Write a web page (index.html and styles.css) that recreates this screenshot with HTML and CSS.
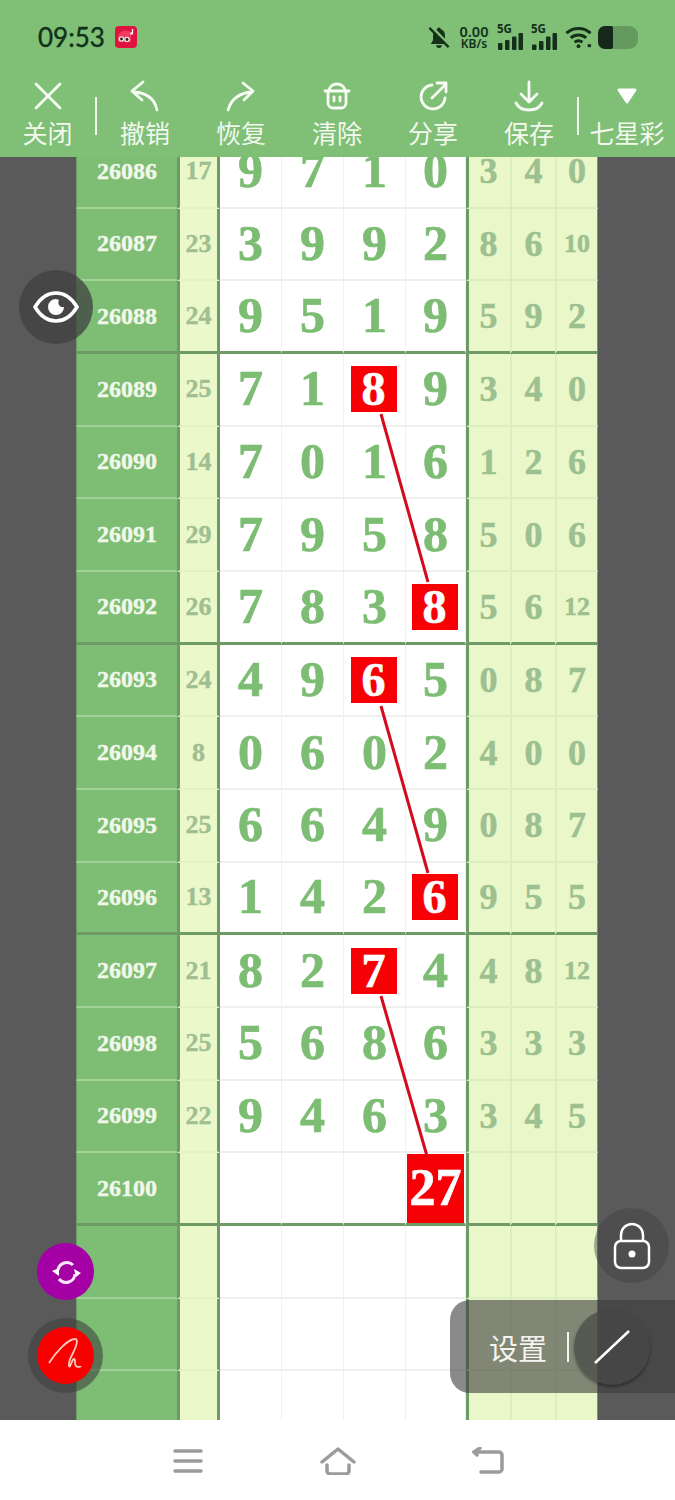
FILE: index.html
```html
<!DOCTYPE html>
<html lang="zh-CN">
<head>
    <meta charset="UTF-8">
    <meta name="viewport" content="width=device-width, initial-scale=1.0">
    <title>七星彩</title>
    <link rel="stylesheet" href="styles.css">
</head>
<body>
    <header class="top">
        <div class="status">
            <span class="time">09:53</span>
            <svg class="pig" viewBox="0 0 22 22"><rect width="22" height="22" rx="4" fill="#e0123f"/><path d="M3 10c2-6 10-7 13-3v9H3z" fill="#f23a5c"/><circle cx="6.500" cy="13" r="2.800" fill="#f6dfe3"/><circle cx="12" cy="13.500" r="2.800" fill="#f6dfe3"/><circle cx="6.500" cy="13" r="1.400" fill="#222"/><circle cx="12" cy="13.500" r="1.400" fill="#222"/><path d="M17.500 3v4.500" stroke="#fff" stroke-width="1.300"/><circle cx="16.500" cy="7.500" r="1.300" fill="#fff"/></svg>
            <div class="status-right">
                <svg class="bell" viewBox="0 0 24 24"><path d="M12 1a2 2 0 0 1 2 2c3 1 4.500 3.500 4.500 7v5l2.500 4H3l2.500-4v-5c0-3.500 1.500-6 4.500-7a2 2 0 0 1 2-2zM9 20.500h6a3 3 0 0 1-6 0z" fill="#14301a"/><path d="M3 0l21 22" stroke="#7fbf76" stroke-width="4"/><path d="M1.500 1.500l21 21" stroke="#14301a" stroke-width="2.500"/></svg>
                <div class="speed"><b>0.00</b><small>KB/s</small></div>
                <div class="signal"><small>5G</small><svg viewBox="0 0 26 17"><rect x="1" y="10" width="4.500" height="7" rx="1"/><rect x="8" y="7" width="4.500" height="10" rx="1"/><rect x="15" y="3.500" width="4.500" height="13.500" rx="1"/><rect x="21.500" y="0" width="4.500" height="17" rx="1"/></svg></div>
                <div class="signal"><small>5G</small><svg viewBox="0 0 26 17"><rect x="1" y="11.500" width="4.500" height="5.500" rx="1"/><rect x="8" y="8" width="4.500" height="9" rx="1"/><rect x="15" y="3.500" width="4.500" height="13.500" rx="1"/><rect x="21.500" y="0" width="4.500" height="17" rx="1"/></svg></div>
                <svg class="wifi" viewBox="0 0 28 24" fill="none" stroke="#14301a" stroke-width="3.200"><path d="M1.500 8c7-6.500 18-6.500 25 0"/><path d="M6 13c4.500-4 11.500-4 16 0"/><path d="M10 17.500c2.500-2 5.500-2 8 0"/><circle cx="14" cy="21.500" r="2" fill="#14301a" stroke="none"/><rect x="23.500" y="19.500" width="3.500" height="3" fill="#14301a" stroke="none"/></svg>
                <div class="battery"><span class="battery-fill"></span></div>
            </div>
        </div>
        <nav class="tools">
            <a class="tool"><svg viewBox="0 0 32 32"><path d="M4 4l24 24M28 4L4 28"/></svg>关闭</a>
            <span class="tool-sep"></span>
            <a class="tool"><svg viewBox="0 0 32 32"><path d="M28 30C26 20 19 13 5 12"/><path d="M14 2L3 11l10 9"/></svg>撤销</a>
            <a class="tool"><svg viewBox="0 0 32 32"><path d="M3 30C6 20 13 13 27 12"/><path d="M18 3l10 8-9 9"/></svg>恢复</a>
            <a class="tool"><svg viewBox="0 0 32 32"><path d="M4 11h24"/><path d="M8 11a8 7 0 0 1 16 0"/><path d="M7 11v12a5 5 0 0 0 5 5h8a5 5 0 0 0 5-5V11"/><path d="M13 17v4M19 17v4"/></svg>清除</a>
            <a class="tool"><svg viewBox="0 0 32 32"><path d="M15 5a12 12 0 1 0 13 13"/><path d="M15 18L29 4M20 3h9v9"/></svg>分享</a>
            <a class="tool"><svg viewBox="0 0 32 32"><path d="M16 2v20M8 14l8 8 8-8"/><path d="M3 23c3 6 8 7 13 7s10-1 13-7"/></svg>保存</a>
            <span class="tool-sep"></span>
            <a class="tool"><svg viewBox="0 0 32 32"><path class="solid" d="M8 10h16l-8 12z"/></svg>七星彩</a>
        </nav>
    </header>

    <main class="main">
        <div class="board">
            <div class="row"><span class="year">26086</span><span class="sum">17</span><span class="n">9</span><span class="n">7</span><span class="n">1</span><span class="n">0</span><span class="r">3</span><span class="r">4</span><span class="r">0</span></div>
            <div class="row"><span class="year">26087</span><span class="sum">23</span><span class="n">3</span><span class="n">9</span><span class="n">9</span><span class="n">2</span><span class="r">8</span><span class="r">6</span><span class="r small">10</span></div>
            <div class="row end"><span class="year">26088</span><span class="sum">24</span><span class="n">9</span><span class="n">5</span><span class="n">1</span><span class="n">9</span><span class="r">5</span><span class="r">9</span><span class="r">2</span></div>
            <div class="row"><span class="year">26089</span><span class="sum">25</span><span class="n">7</span><span class="n">1</span><span class="n"><b class="hit">8</b></span><span class="n">9</span><span class="r">3</span><span class="r">4</span><span class="r">0</span></div>
            <div class="row"><span class="year">26090</span><span class="sum">14</span><span class="n">7</span><span class="n">0</span><span class="n">1</span><span class="n">6</span><span class="r">1</span><span class="r">2</span><span class="r">6</span></div>
            <div class="row"><span class="year">26091</span><span class="sum">29</span><span class="n">7</span><span class="n">9</span><span class="n">5</span><span class="n">8</span><span class="r">5</span><span class="r">0</span><span class="r">6</span></div>
            <div class="row end"><span class="year">26092</span><span class="sum">26</span><span class="n">7</span><span class="n">8</span><span class="n">3</span><span class="n"><b class="hit">8</b></span><span class="r">5</span><span class="r">6</span><span class="r small">12</span></div>
            <div class="row"><span class="year">26093</span><span class="sum">24</span><span class="n">4</span><span class="n">9</span><span class="n"><b class="hit">6</b></span><span class="n">5</span><span class="r">0</span><span class="r">8</span><span class="r">7</span></div>
            <div class="row"><span class="year">26094</span><span class="sum">8</span><span class="n">0</span><span class="n">6</span><span class="n">0</span><span class="n">2</span><span class="r">4</span><span class="r">0</span><span class="r">0</span></div>
            <div class="row"><span class="year">26095</span><span class="sum">25</span><span class="n">6</span><span class="n">6</span><span class="n">4</span><span class="n">9</span><span class="r">0</span><span class="r">8</span><span class="r">7</span></div>
            <div class="row end"><span class="year">26096</span><span class="sum">13</span><span class="n">1</span><span class="n">4</span><span class="n">2</span><span class="n"><b class="hit">6</b></span><span class="r">9</span><span class="r">5</span><span class="r">5</span></div>
            <div class="row"><span class="year">26097</span><span class="sum">21</span><span class="n">8</span><span class="n">2</span><span class="n"><b class="hit">7</b></span><span class="n">4</span><span class="r">4</span><span class="r">8</span><span class="r small">12</span></div>
            <div class="row"><span class="year">26098</span><span class="sum">25</span><span class="n">5</span><span class="n">6</span><span class="n">8</span><span class="n">6</span><span class="r">3</span><span class="r">3</span><span class="r">3</span></div>
            <div class="row"><span class="year">26099</span><span class="sum">22</span><span class="n">9</span><span class="n">4</span><span class="n">6</span><span class="n">3</span><span class="r">3</span><span class="r">4</span><span class="r">5</span></div>
            <div class="row end"><span class="year">26100</span><span class="sum"></span><span class="n"></span><span class="n"></span><span class="n"></span><span class="n"><b class="hit big">27</b></span><span class="r"></span><span class="r"></span><span class="r"></span></div>
            <div class="row"><span class="year"></span><span class="sum"></span><span class="n"></span><span class="n"></span><span class="n"></span><span class="n"></span><span class="r"></span><span class="r"></span><span class="r"></span></div>
            <div class="row"><span class="year"></span><span class="sum"></span><span class="n"></span><span class="n"></span><span class="n"></span><span class="n"></span><span class="r"></span><span class="r"></span><span class="r"></span></div>
            <div class="row"><span class="year"></span><span class="sum"></span><span class="n"></span><span class="n"></span><span class="n"></span><span class="n"></span><span class="r"></span><span class="r"></span><span class="r"></span></div>
        </div>

        <!-- lines between the marked numbers -->
        <svg class="lines" viewBox="0 0 675 1263">
            <path d="M381 257L428 425"/>
            <path d="M381 549L428 716"/>
            <path d="M381 839L427 999"/>
        </svg>

        <button class="float eye"><svg viewBox="0 0 46 32"><path d="M2 16C8 6 15 2 23 2s15 4 21 14c-6 10-13 14-21 14S8 26 2 16z" fill="none" stroke="#fff" stroke-width="3.500"/><path d="M23 8a8 8 0 1 0 8 8c-4 1-7-3-5-7z" fill="#fff"/></svg></button>
        <button class="float sync"><svg viewBox="0 0 32 32" fill="none" stroke="#fbe6fb" stroke-width="3"><path d="M8 14a9 9 0 0 1 15-5"/><path d="M25 18a9 9 0 0 1-16 5"/><path d="M2 15l7-3v8z" fill="#fff" stroke="none"/><path d="M31 17l-7-4 2 8z" fill="#fff" stroke="none"/></svg></button>
        <button class="float pen"><span class="pen-dot"><svg viewBox="0 0 40 40" fill="none" stroke="#ffc9bc" stroke-width="1.800"><path d="M3 27C10 16 22 3 29 3c4 0 1 8-2 14-2 4-5 9-4 13 1 3 3-7 5-7 2 0 0 5 2 7 1 2 4 0 5 1"/></svg></span></button>
        <button class="float lock"><svg viewBox="0 0 38 48" fill="none" stroke="#fff" stroke-width="2.500"><rect x="2" y="19" width="34" height="27" rx="6"/><path d="M8 19v-6a11 11 0 0 1 22 0v6"/><circle cx="19" cy="32" r="3.500" fill="#fff" stroke="none"/></svg></button>
        <div class="settings">
            <span class="settings-text">设置</span>
            <span class="settings-sep"></span>
            <span class="settings-btn"><svg viewBox="0 0 38 36"><path d="M2 34L36 2" stroke="#fff" stroke-width="2.500"/></svg></span>
        </div>
    </main>

    <footer class="bottom">
        <svg class="nav-icon" viewBox="0 0 32 28"><path d="M3 4h26M3 14h26M3 24h26"/></svg>
        <svg class="nav-icon home" viewBox="0 0 36 28"><path d="M2 15L18 2l16 13"/><path d="M7 18v6a3 3 0 0 0 3 3h16a3 3 0 0 0 3-3v-6"/></svg>
        <svg class="nav-icon" viewBox="0 0 32 28"><path d="M2 5h25a3 3 0 0 1 3 3v14a3 3 0 0 1-3 3H9"/><path d="M8 1L2 5l3 3"/></svg>
    </footer>
</body>
</html>
```

FILE: styles.css
```css
* {
    box-sizing: border-box;
}

html, body {
    margin: 0;
    padding: 0;
}

body {
    width: 675px;
    height: 1500px;
    display: flex;
    flex-direction: column;
    overflow: hidden;
    background-color: #fff;
    font-family: "Noto Sans CJK SC", "Noto Sans", sans-serif;
}

.top {
    height: 157px;
    background-color: #7fbf76;
    flex: none;
}

.status {
    height: 72px;
    padding: 2px 37px 0 38px;
    display: flex;
    align-items: center;
}

.time {
    font-family: Lato, sans-serif;
    font-size: 26px;
    font-weight: 400;
    -webkit-text-stroke: 0.4px #10301a;
    color: #10301a;
}

.pig {
    width: 22px;
    height: 22px;
    margin-left: 10px;
}

.status-right {
    margin-left: auto;
    display: flex;
    align-items: center;
    gap: 8px;
}

.bell {
    width: 22px;
    height: 23px;
}

.speed {
    width: 30px;
    margin-left: 1px;
    display: flex;
    flex-direction: column;
    align-items: center;
    font-family: "Noto Sans", sans-serif;
    color: #14301a;
}

.speed b {
    font-size: 14.500px;
    font-weight: 600;
    line-height: 14px;
}

.speed small {
    font-size: 12px;
    font-weight: 600;
    line-height: 12px;
}

.signal {
    width: 26px;
    height: 25px;
    position: relative;
}

.signal small {
    position: absolute;
    left: 0;
    top: -3px;
    font-family: "Noto Sans", sans-serif;
    font-size: 11.500px;
    font-weight: 700;
    line-height: 13px;
    color: #14301a;
}

.signal svg {
    position: absolute;
    left: 0;
    bottom: 0;
    width: 26px;
    height: 17px;
    fill: #14301a;
}

.wifi {
    width: 27px;
    height: 24px;
}

.battery {
    width: 40px;
    height: 23px;
    margin-left: -2px;
    border-radius: 7px 9px 9px 7px;
    background-color: #659a5e;
}

.battery-fill {
    display: block;
    width: 15px;
    height: 23px;
    border-radius: 7px 2px 2px 7px;
    background-color: #16281a;
}

.tools {
    height: 85px;
    display: flex;
    align-items: flex-start;
}

.tool {
    width: 96px;
    flex: none;
    display: flex;
    flex-direction: column;
    align-items: center;
    color: #f2f8ee;
    font-size: 25px;
    line-height: 36px;
}

.tool svg {
    width: 32px;
    height: 32px;
    margin-top: 8px;
    margin-bottom: 2px;
    fill: none;
    stroke: #f7fbf4;
    stroke-width: 2.800;
    stroke-linecap: round;
    stroke-linejoin: round;
}

.tool .solid {
    fill: #fff;
    stroke: #fff;
}

.tool:first-child {
    width: 95px;
}

.tool-sep {
    width: 2px;
    height: 38px;
    margin-top: 25px;
    background-color: #f2f8ee;
    flex: none;
}

.main {
    flex: 1;
    position: relative;
    overflow: hidden;
    background-color: #5a5a5a;
}

.board {
    margin: -21px 0 0 76px;
    width: 522px;
}

.row {
    height: 72.670px;
    display: grid;
    grid-template-columns: 101px 43px 62px 62px 62px 60px 44px 45px 43px;
}

.row > span {
    display: flex;
    align-items: center;
    justify-content: center;
    font-family: "Liberation Serif", serif;
    font-weight: 700;
}

.year {
    background-color: #7dbd74;
    border-bottom: 2px solid #a0d196;
    border-left: 1px solid #6a9f62;
    color: #f1f8ea;
    font-size: 24px;
    -webkit-text-stroke: 0.4px #f1f8ea;
}

.sum {
    background-color: #ebf8ca;
    border-left: 3px solid #6e9a66;
    border-right: 3px solid #6e9a66;
    border-bottom: 2px solid #e2f2c2;
    color: #9fbf92;
    font-size: 26px;
    -webkit-text-stroke: 0.4px #9fbf92;
}

.n {
    background-color: #fff;
    border-right: 1px solid #f0f1ef;
    border-bottom: 2px solid #eff0ee;
    padding-bottom: 2px;
    color: #7cbd73;
    font-size: 50px;
    -webkit-text-stroke: 0.7px #7cbd73;
}

.r {
    background-color: #e9f7c9;
    border-left: 2px solid #dcedc0;
    border-bottom: 2px solid #dcedc0;
    color: #9cc090;
    font-size: 36px;
    -webkit-text-stroke: 0.5px #9cc090;
}

.row > .n + .r {
    border-left: 3px solid #6e9a66;
    padding-right: 2px;
}

.row > .r:last-child {
    border-right: 1px solid #6e9a66;
}

.row > .small {
    font-size: 26px;
}

.row.end > span {
    border-bottom: 3px solid #6e9a66;
}

.hit {
    width: 46px;
    height: 46px;
    margin: 0 2px -2px 0;
    background-color: #f60005;
    color: #fff;
    -webkit-text-stroke: 0.7px #fff;
    display: flex;
    align-items: center;
    justify-content: center;
    font-size: 48px;
    line-height: 46px;
}

.hit.big {
    width: 57px;
    height: 69px;
    margin-right: 0;
    font-size: 52px;
}

.lines {
    position: absolute;
    left: 0;
    top: 0;
    width: 675px;
    height: 1263px;
    fill: none;
    stroke: #d40a1e;
    stroke-width: 3;
}

.float {
    position: absolute;
    padding: 0;
    border: none;
    border-radius: 50%;
    display: flex;
    align-items: center;
    justify-content: center;
}

.eye {
    left: 19px;
    top: 113px;
    width: 74px;
    height: 74px;
    background-color: rgba(64, 64, 64, 0.75);
}

.eye svg {
    width: 46px;
    height: 32px;
}

.sync {
    left: 37px;
    top: 1086px;
    width: 57px;
    height: 57px;
    background-color: #a500a5;
}

.sync svg {
    width: 32px;
    height: 32px;
}

.pen {
    left: 28px;
    top: 1161px;
    width: 75px;
    height: 75px;
    background-color: rgba(64, 64, 64, 0.6);
}

.pen-dot {
    width: 57px;
    height: 57px;
    border-radius: 50%;
    background-color: #f70000;
    display: flex;
    align-items: center;
    justify-content: center;
}

.pen-dot svg {
    width: 40px;
    height: 40px;
}

.lock {
    left: 594px;
    top: 1051px;
    width: 75px;
    height: 75px;
    background-color: rgba(64, 64, 64, 0.45);
}

.lock svg {
    width: 38px;
    height: 48px;
}

.settings {
    position: absolute;
    left: 450px;
    top: 1143px;
    width: 225px;
    height: 93px;
    border-radius: 20px 0 0 20px;
    background-color: rgba(60, 60, 60, 0.6);
    display: flex;
    align-items: center;
    padding-left: 39px;
}

.settings-text {
    color: #f4f4f0;
    font-size: 29px;
    line-height: 36px;
}

.settings-sep {
    width: 2px;
    height: 30px;
    margin-left: 20px;
    background-color: #f4f4f0;
}

.settings-btn {
    width: 76px;
    height: 76px;
    margin-left: 5px;
    border-radius: 50%;
    background-color: rgba(70, 70, 70, 0.7);
    box-shadow: 0 2px 3px rgba(0, 0, 0, 0.4);
    display: flex;
    align-items: center;
    justify-content: center;
}

.settings-btn svg {
    width: 38px;
    height: 36px;
}

.bottom {
    height: 80px;
    flex: none;
    background-color: #fff;
    display: flex;
    align-items: center;
    justify-content: space-between;
    padding: 1px 171px 0 172px;
}

.nav-icon {
    width: 32px;
    height: 28px;
    fill: none;
    stroke: #9b9b9b;
    stroke-width: 3.500;
    stroke-linecap: round;
    stroke-linejoin: round;
}

.nav-icon.home {
    width: 36px;
}
```
